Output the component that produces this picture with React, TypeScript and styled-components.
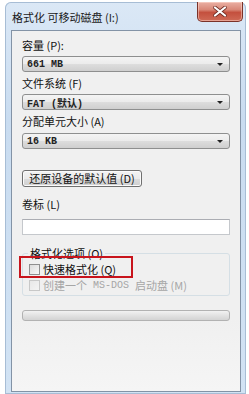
import React from "react";
import styled, { createGlobalStyle } from "styled-components";

const Global = createGlobalStyle`
  html, body { margin: 0; padding: 0; background: #ffffff; }
  body { width: 249px; height: 394px; overflow: hidden; font-family: "Noto Sans CJK SC", "Noto Sans", sans-serif; }
`;

const Page = styled.div`
  padding: 2px 3px 0 5px;
`;

const Window = styled.div`
  position: relative;
  width: 241px;
  height: 392px;
  border-radius: 6px 6px 0 0;
  background: linear-gradient(180deg, #dbe8f6 0%, #c9dcf0 30%, #d2e3f4 100%);
  box-shadow: inset 0 0 0 1px #a7bdd5;
  display: flex;
  flex-direction: column;
`;

const TitleBar = styled.div`
  height: 26px;
  display: flex;
  align-items: flex-start;
  padding-left: 7px;
`;

const Title = styled.div`
  font-size: 11px;
  line-height: 14px;
  margin-top: 8px;
  color: #1a1a1a;
  white-space: nowrap;
`;

const CloseButton = styled.div`
  margin-left: auto;
  margin-right: 3px;
  width: 44px;
  height: 19px;
  border: 1px solid #7b3229;
  border-top: none;
  border-radius: 0 0 5px 5px;
  background: linear-gradient(180deg, #eab0a4 0%, #d98878 40%, #c4503e 55%, #cf6a56 100%);
  display: flex;
  align-items: center;
  justify-content: center;
  box-shadow: inset 0 0 0 1px rgba(255, 220, 210, 0.5);
`;

const Client = styled.div`
  margin: 2px 5px 2px 6px;
  flex: 1;
  border: 1px solid #8393a6;
  background: linear-gradient(180deg, #f0f0f0 0%, #f0f0f0 80%, #f5f5f5 100%);
  padding: 7px 10px 0 10px;
  display: flex;
  flex-direction: column;
  position: relative;
`;

const Label = styled.div<{ $mt?: number }>`
  margin-top: ${(p) => p.$mt ?? 0}px;
  font-size: 11px;
  line-height: 14px;
  color: #111;
  white-space: nowrap;
`;

const Combo = styled.div<{ $mt?: number }>`
  margin-top: ${(p) => p.$mt ?? 0}px;
  height: 14px;
  border: 1px solid #8e8f8f;
  border-radius: 3px;
  background: linear-gradient(180deg, #f4f4f4 0%, #ebebeb 50%, #dddddd 51%, #cfcfcf 100%);
  display: flex;
  align-items: center;
  padding: 0 6px 0 4px;
`;

const ComboText = styled.span`
  font-family: "Liberation Mono", "Noto Sans CJK SC", monospace;
  font-size: 10px;
  font-weight: bold;
  color: #222;
  white-space: nowrap;
  flex: 1;
`;

const Arrow = styled.span`
  width: 0;
  height: 0;
  border-left: 3px solid transparent;
  border-right: 3px solid transparent;
  border-top: 3px solid #222;
`;

const PushButton = styled.div<{ $mt?: number }>`
  margin-top: ${(p) => p.$mt ?? 0}px;
  align-self: flex-start;
  width: 118px;
  height: 15px;
  border: 1px solid #707070;
  border-radius: 3px;
  background: linear-gradient(180deg, #f3f3f3 0%, #ebebeb 50%, #dddddd 51%, #cfcfcf 100%);
  box-shadow: inset 0 0 0 1px #fbfbfb;
  font-size: 11px;
  line-height: 15px;
  text-align: center;
  color: #111;
  white-space: nowrap;
`;

const TextInput = styled.div<{ $mt?: number }>`
  margin-top: ${(p) => p.$mt ?? 0}px;
  height: 14px;
  border: 1px solid #c5c8cc;
  border-top-color: #abadb3;
  background: #ffffff;
`;

const Group = styled.div<{ $mt?: number }>`
  margin-top: ${(p) => p.$mt ?? 0}px;
  position: relative;
  padding-top: 6px;
`;

const GroupBox = styled.div`
  border: 1px solid #d5dfe5;
  border-radius: 3px;
  height: 32px;
  padding: 9px 0 0 6px;
  display: flex;
  flex-direction: column;
  gap: 3px;
`;

const Legend = styled.div`
  position: absolute;
  top: 0;
  left: 6px;
  padding: 0 2px;
  background: #f0f0f0;
  font-size: 11px;
  line-height: 12px;
  color: #111;
  white-space: nowrap;
`;

const CheckRow = styled.div<{ $disabled?: boolean }>`
  display: flex;
  align-items: center;
  gap: 3px;
  height: 13px;
  font-size: 11px;
  line-height: 13px;
  color: ${(p) => (p.$disabled ? "#a6a6a6" : "#111")};
  white-space: nowrap;
`;

const Box = styled.span<{ $disabled?: boolean }>`
  width: 9px;
  height: 9px;
  border: 1px solid ${(p) => (p.$disabled ? "#c8c8c8" : "#8f8f8f")};
  background: ${(p) =>
    p.$disabled
      ? "linear-gradient(135deg, #e8e8e8, #f4f4f4)"
      : "linear-gradient(135deg, #dcdcdc, #f8f8f8)"};
  flex: none;
`;

const Mono = styled.span`
  font-family: "Liberation Mono", monospace;
  font-size: 10px;
  margin: 0 3px;
`;

const Highlight = styled.div`
  position: absolute;
  left: 7px;
  top: 225px;
  width: 110px;
  height: 18px;
  border: 2px solid #c8141c;
`;

const Progress = styled.div<{ $mt?: number }>`
  margin-top: ${(p) => p.$mt ?? 0}px;
  height: 9px;
  border: 1px solid #b2b2b2;
  border-radius: 3px;
  background: linear-gradient(180deg, #f2f2f2 0%, #e2e2e2 50%, #d3d3d3 100%);
`;

const XIcon = () => (
  <svg width="14" height="11" viewBox="0 0 14 11">
    <path d="M2 1.5 L12 9.5 M12 1.5 L2 9.5" stroke="#6d2a22" strokeWidth="3.6" strokeLinecap="round" />
    <path d="M2 1.5 L12 9.5 M12 1.5 L2 9.5" stroke="#ffffff" strokeWidth="2.2" strokeLinecap="round" />
  </svg>
);

export default function App() {
  return (
    <Page>
      <Global />
      <Window>
        <TitleBar>
          <Title>格式化 可移动磁盘 (I:)</Title>
          <CloseButton>
            <XIcon />
          </CloseButton>
        </TitleBar>
        <Client>
          <Label>容量 (P):</Label>
          <Combo $mt={4}>
            <ComboText>661 MB</ComboText>
            <Arrow />
          </Combo>
          <Label $mt={4}>文件系统 (F)</Label>
          <Combo $mt={4}>
            <ComboText>FAT (默认)</ComboText>
            <Arrow />
          </Combo>
          <Label $mt={4}>分配单元大小 (A)</Label>
          <Combo $mt={5}>
            <ComboText>16 KB</ComboText>
            <Arrow />
          </Combo>
          <PushButton $mt={21}>还原设备的默认值 (D)</PushButton>
          <Label $mt={10}>卷标 (L)</Label>
          <TextInput $mt={8} />
          <Group $mt={12}>
            <Legend>格式化选项 (O)</Legend>
            <GroupBox>
              <CheckRow>
                <Box />
                快速格式化 (Q)
              </CheckRow>
              <CheckRow $disabled>
                <Box $disabled />
                创建一个<Mono>MS-DOS</Mono>启动盘 (M)
              </CheckRow>
            </GroupBox>
          </Group>
          <Progress $mt={14} />
          <Highlight />
        </Client>
      </Window>
    </Page>
  );
}
